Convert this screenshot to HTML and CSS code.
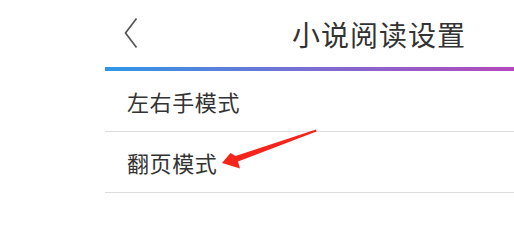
FILE: index.html
```html
<!DOCTYPE html>
<html lang="zh-CN">
<head>
<meta charset="utf-8">
<title>小说阅读设置</title>
<link rel="stylesheet" href="styles.css">
</head>
<body>
<div class="page">
  <div class="panel">
    <header class="header">
      <svg class="back" width="14" height="32" viewBox="0 0 14 32">
        <polyline points="12.5,1.5 1.5,16 12.5,30.5" fill="none" stroke="#555" stroke-width="1.7"/>
      </svg>
      <h1 class="title">小说阅读设置</h1>
    </header>
    <div class="bar"></div>
    <ul class="list">
      <li class="item">左右手模式</li>
      <li class="item">翻页模式</li>
    </ul>
  </div>
  <svg class="arrow" width="514" height="200" viewBox="0 0 514 200">
    <polygon points="316,129.5 235.5,156 230.5,153 222,163 240,168.5 238,161.5 316.5,131.5" fill="#f5251c"/>
  </svg>
</div>
</body>
</html>
```
FILE: styles.css
```css
html, body {
  margin: 0;
  padding: 0;
  background: #fff;
}
body {
  font-family: "Noto Sans CJK SC", "Noto Sans", sans-serif;
  color: #333;
}
.page {
  position: relative;
  width: 514px;
  height: 200px;
  overflow: hidden;
}
.panel {
  margin-left: 105px;
  width: 409px;
}
.header {
  height: 67px;
  display: flex;
  align-items: center;
  padding-left: 19px;
}
.back {
  display: block;
  margin-top: -1px;
}
.title {
  margin: 0 0 0 154px;
  font-size: 28px;
  font-weight: 400;
  color: #333;
  letter-spacing: 1px;
}
.bar {
  height: 4px;
  background: linear-gradient(to right, #2e97e6, #7a6ed2 50%, #b548bc);
}
.list {
  list-style: none;
  margin: 0;
  padding: 0;
}
.item {
  height: 60px;
  display: flex;
  align-items: center;
  padding-left: 22px;
  font-size: 22px;
  letter-spacing: 0.6px;
  color: #333;
  border-bottom: 1px solid #dcdcdc;
}
.arrow {
  position: absolute;
  left: 0;
  top: 0;
}
```
